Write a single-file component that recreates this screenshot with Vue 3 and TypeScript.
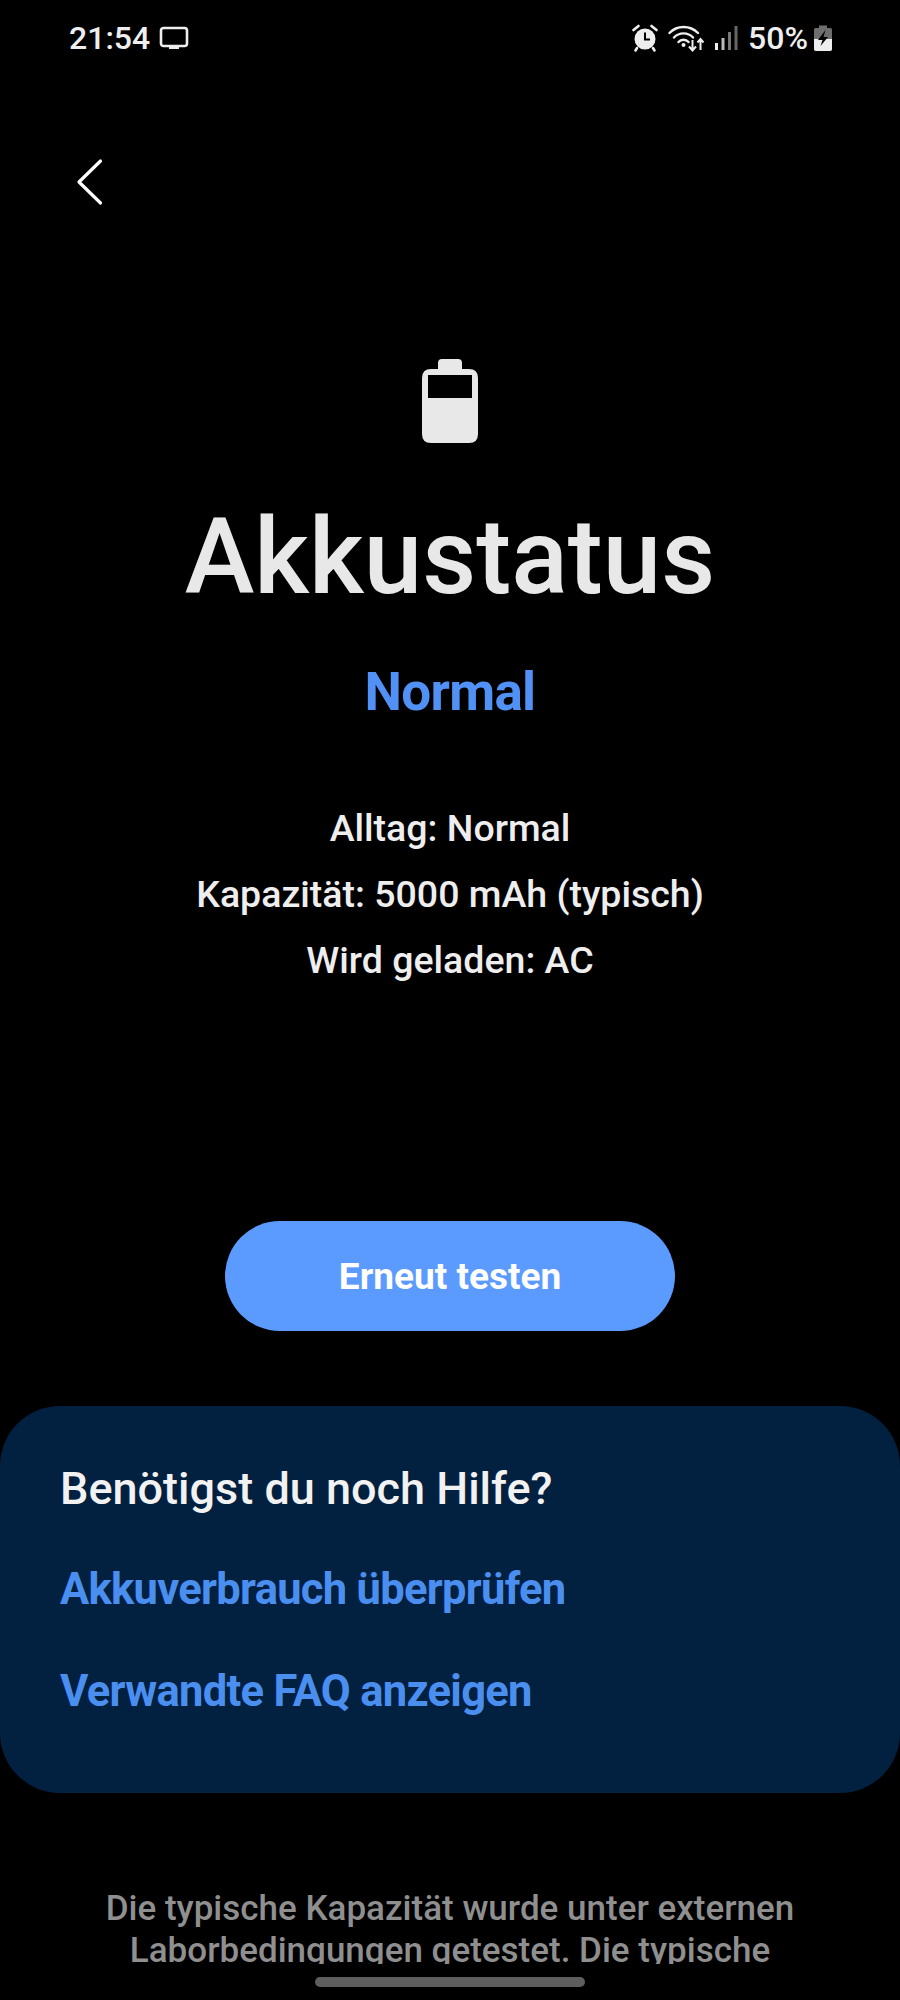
<template>
  <div class="screen">
    <div class="status-bar">
      <div class="status-left">
        <span class="clock">21:54</span>
        <svg class="cast-icon" width="30" height="26" viewBox="0 0 30 26">
          <rect x="2" y="3" width="26" height="18" rx="2.5" fill="none" stroke="#eee" stroke-width="2.6" />
          <rect x="10" y="21" width="10" height="3" fill="#eee" />
        </svg>
      </div>
      <div class="status-right">
        <svg class="alarm-icon" width="26" height="28" viewBox="0 0 26 28">
          <circle cx="13" cy="15" r="10.5" fill="#eee" />
          <path d="M13 8.5V15.5H18" fill="none" stroke="#000" stroke-width="2" />
          <path d="M1.5 6L6.5 2M24.5 6L19.5 2" stroke="#eee" stroke-width="2.6" stroke-linecap="round" />
          <path d="M5 24L3.5 26.5M21 24L22.5 26.5" stroke="#eee" stroke-width="2.6" stroke-linecap="round" />
        </svg>
        <svg class="wifi-icon" width="38" height="28" viewBox="0 0 38 28">
          <path d="M1.5 9C9 1 22 1 30 9M6 13.5C11 8 20 8 25 13.5M10.5 18C13 15 18 15 20.5 18" fill="none" stroke="#eee" stroke-width="2.4" stroke-linecap="round" />
          <circle cx="15.5" cy="21" r="2" fill="#eee" />
          <path d="M24.5 16V26M21 22.5L24.5 26.5L28 22.5" fill="none" stroke="#eee" stroke-width="2" />
          <path d="M32.5 26V15M29.5 18.5L32.5 15L35.5 18.5" fill="none" stroke="#eee" stroke-width="2" />
        </svg>
        <svg class="signal-icon" width="24" height="26" viewBox="0 0 24 26">
          <rect x="1" y="18" width="3" height="7" fill="#eee" />
          <rect x="7.5" y="13" width="3" height="12" fill="#bbb" />
          <rect x="14" y="7" width="3" height="18" fill="#777" />
          <rect x="20.5" y="1" width="3" height="24" fill="#666" />
        </svg>
        <span class="percent">50%</span>
        <svg class="battery-small" width="20" height="28" viewBox="0 0 20 28">
          <path d="M6 1.5H14V4H17.5Q19 4 19 6V25Q19 27 17 27H3Q1 27 1 25V6Q1 4 2.5 4H6Z" fill="#6e6e6e" />
          <path d="M1 15H19V25Q19 27 17 27H3Q1 27 1 25Z" fill="#eee" />
          <path d="M12.5 6L5 16H9.5L7.5 22L15 13H10.5Z" fill="#000" />
        </svg>
      </div>
    </div>

    <div class="back-row">
      <svg width="30" height="50" viewBox="0 0 30 50">
        <path d="M25.5 4L4 25L25.5 46" fill="none" stroke="#fff" stroke-width="3.2" stroke-linecap="round" stroke-linejoin="round" />
      </svg>
    </div>

    <div class="hero">
      <svg class="battery-big" width="56" height="84" viewBox="0 0 56 84">
        <path d="M20 0H36Q40 0 40 4V10H47Q56 10 56 19V75Q56 84 47 84H9Q0 84 0 75V19Q0 10 9 10H16V4Q16 0 20 0Z" fill="#e8e8e8" />
        <rect x="6" y="16" width="44" height="23" fill="#000" />
      </svg>
      <h1 class="title">Akkustatus</h1>
      <div class="state">Normal</div>
      <div class="details">
        <div v-for="line in details" :key="line" class="detail">{{ line }}</div>
      </div>
      <button class="retest">Erneut testen</button>
    </div>

    <div class="help-card">
      <div class="help-title">Benötigst du noch Hilfe?</div>
      <a v-for="link in links" :key="link" class="help-link">{{ link }}</a>
    </div>

    <div class="note">
      Die typische Kapazität wurde unter externen<br />Laborbedingungen getestet. Die typische
    </div>
    <div class="home-bar"></div>
  </div>
</template>

<script setup lang="ts">
const details: string[] = [
  'Alltag: Normal',
  'Kapazität: 5000 mAh (typisch)',
  'Wird geladen: AC',
]

const links: string[] = ['Akkuverbrauch überprüfen', 'Verwandte FAQ anzeigen']
</script>

<style>
html,
body {
  margin: 0;
  background: #000;
}
</style>

<style scoped>
.screen {
  position: relative;
  width: 900px;
  height: 2000px;
  overflow: hidden;
  background: #000;
  font-family: Roboto, "Noto Sans", sans-serif;
  color: #eee;
}

.status-bar {
  height: 76px;
  padding: 0 67px 0 69px;
  display: flex;
  align-items: center;
  justify-content: space-between;
}

.status-left,
.status-right {
  display: flex;
  align-items: center;
}

.clock {
  font-size: 32px;
  font-weight: 500;
}

.cast-icon {
  margin-left: 9px;
}

.wifi-icon {
  margin-left: 10px;
}

.signal-icon {
  margin-left: 8px;
}

.percent {
  margin-left: 10px;
  font-size: 32px;
  font-weight: 500;
}

.battery-small {
  margin-left: 5px;
}

.back-row {
  height: 50px;
  margin-top: 81px;
  padding-left: 75px;
}

.hero {
  display: flex;
  flex-direction: column;
  align-items: center;
  margin-top: 152px;
}

.title {
  margin: 55px 0 0;
  font-size: 105px;
  line-height: 120px;
  font-weight: 500;
  color: #e8e8e8;
}

.state {
  margin-top: 44px;
  font-size: 53px;
  line-height: 60px;
  font-weight: 700;
  letter-spacing: -0.7px;
  color: #5191f5;
}

.details {
  margin-top: 73px;
}

.detail {
  font-size: 37.5px;
  line-height: 66px;
  font-weight: 500;
  text-align: center;
  color: #eee;
}

.retest {
  width: 450px;
  height: 110px;
  margin-top: 228px;
  border: none;
  border-radius: 55px;
  background: #5b9aff;
  color: #fff;
  font-family: inherit;
  font-size: 37px;
  font-weight: 700;
}

.help-card {
  height: 387px;
  margin-top: 75px;
  padding: 58px 60px 0;
  box-sizing: border-box;
  border-radius: 60px;
  background: #02203f;
}

.help-title {
  font-size: 45px;
  line-height: 50px;
  font-weight: 500;
  color: #f2f2f2;
}

.help-link {
  display: block;
  margin-top: 51px;
  font-size: 43.5px;
  line-height: 50px;
  font-weight: 700;
  letter-spacing: -0.7px;
  color: #4a8ff0;
}

.help-link + .help-link {
  margin-top: 52px;
}

.note {
  height: 76px;
  margin-top: 95px;
  overflow: hidden;
  font-size: 35px;
  line-height: 42px;
  font-weight: 500;
  text-align: center;
  color: #8f8f8f;
}

.home-bar {
  position: absolute;
  left: 315px;
  top: 1977px;
  width: 270px;
  height: 10px;
  border-radius: 5px;
  background: #5e5e5e;
}
</style>
